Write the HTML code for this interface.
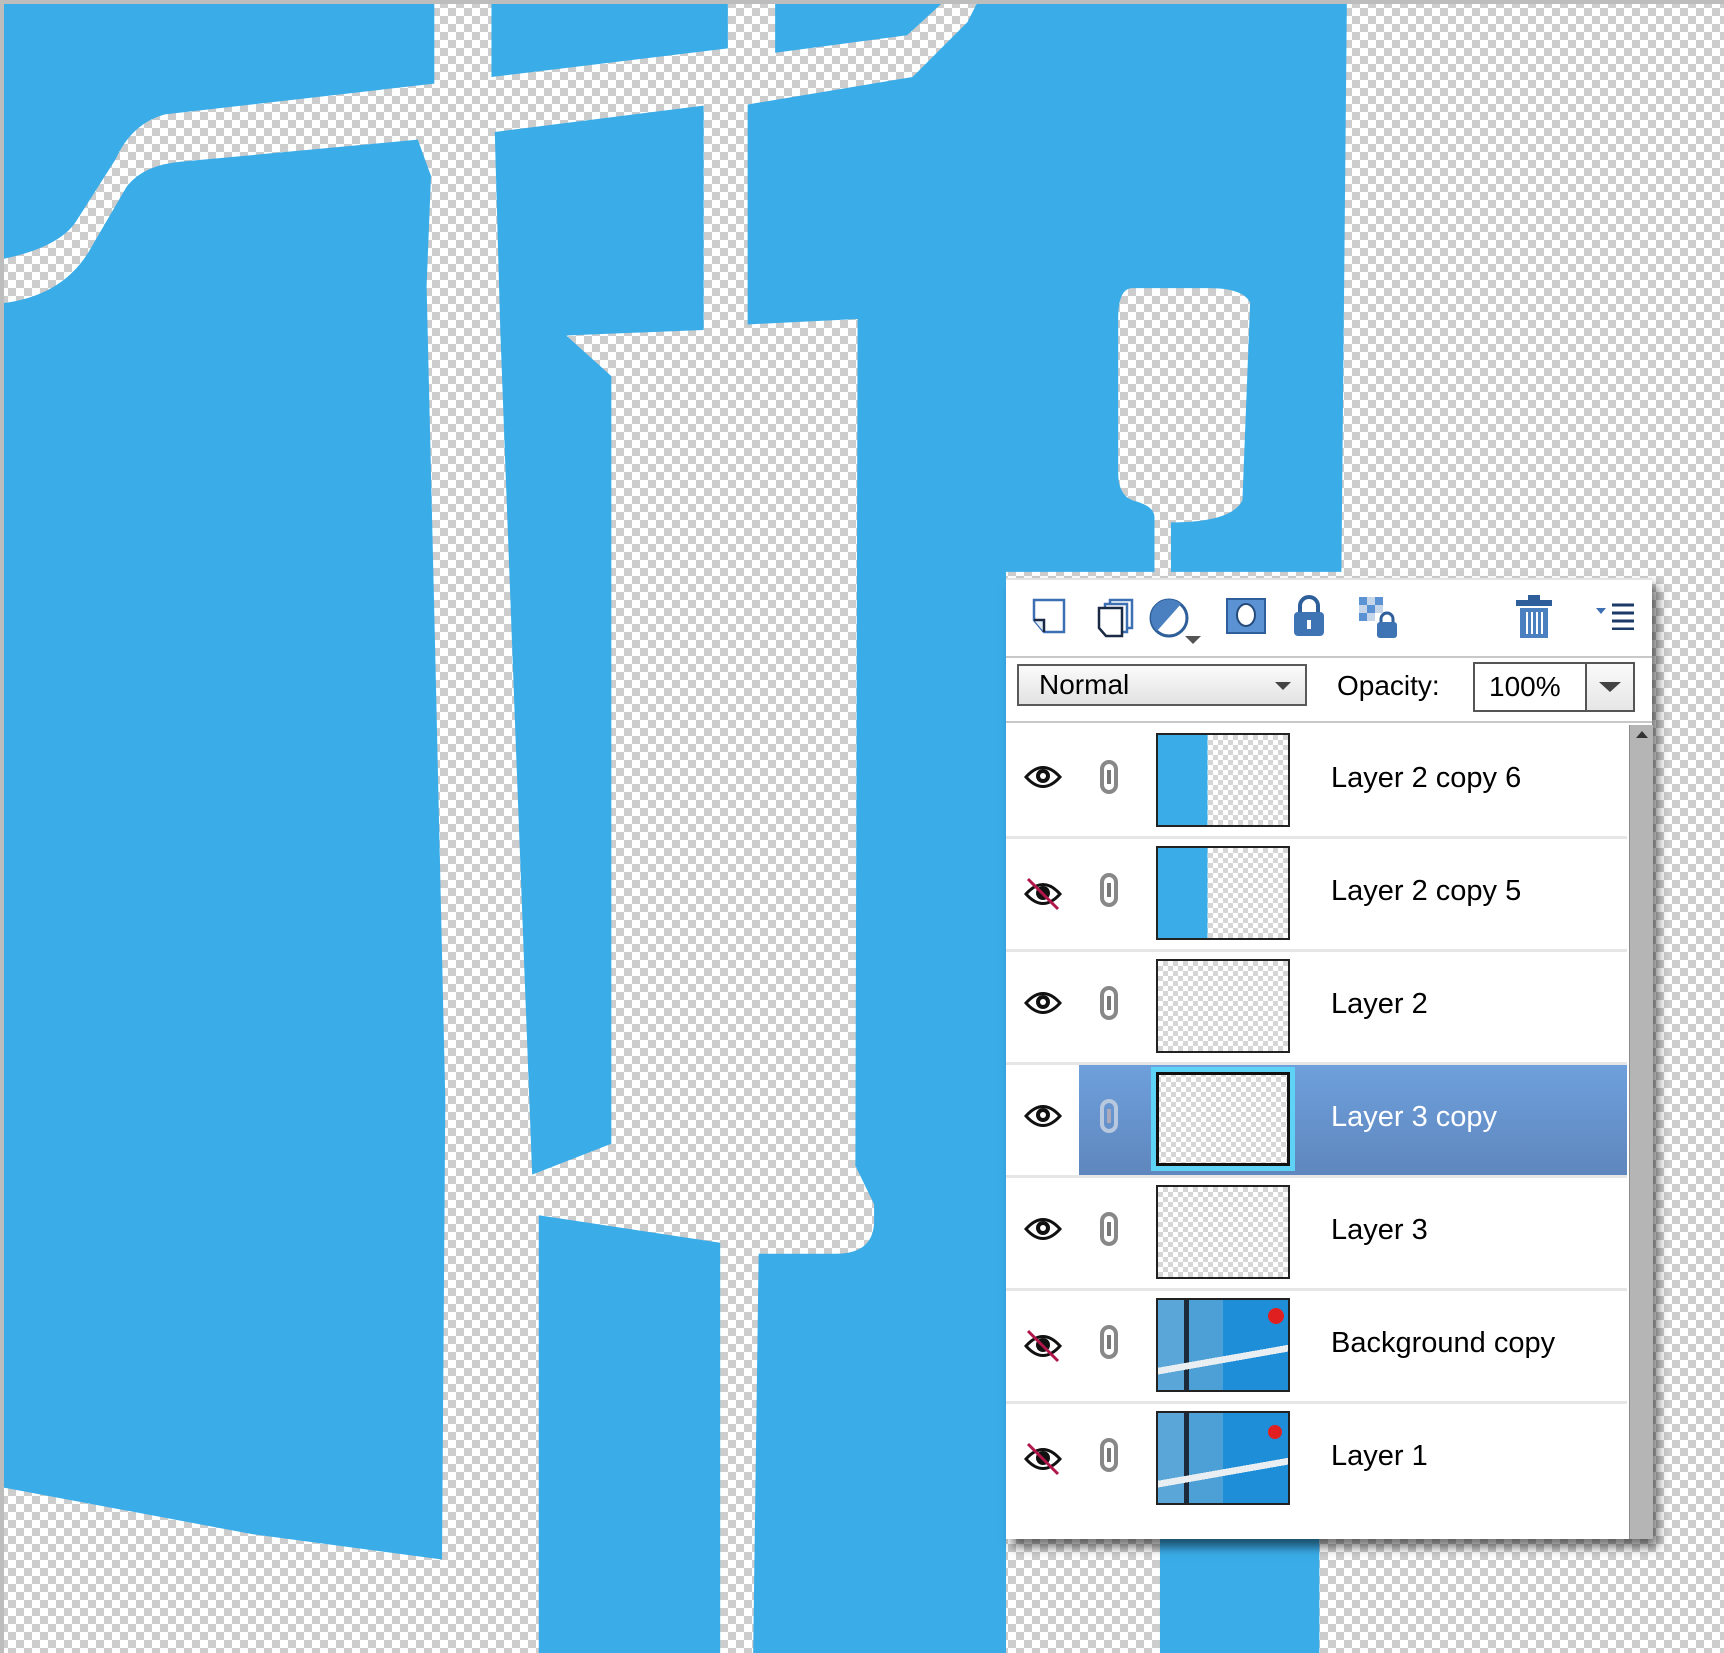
<!DOCTYPE html>
<html><head><meta charset="utf-8"><style>
html,body{margin:0;padding:0}
body{width:1724px;height:1653px;position:relative;overflow:hidden;font-family:"Liberation Sans","DejaVu Sans",sans-serif;
background-color:#fff;background-image:conic-gradient(#cdcdcd 25%,#fff 0 50%,#cdcdcd 0 75%,#fff 0);background-size:16px 16px;}
#bg{position:absolute;left:0;top:0;width:1724px;height:1653px}
.frame{position:absolute;left:0;top:0;width:1724px;height:1653px;box-sizing:border-box;border-top:4px solid #bdbdbd;border-left:4px solid #bdbdbd}
#panel{position:absolute;left:1006px;top:578px;width:646px;height:959px;background:#fff;box-shadow:6px 8px 10px rgba(0,0,0,.55);border-top:2px solid #e4e4e4}
.tb{position:absolute;left:0;top:0;width:646px;height:76px;border-bottom:2px solid #c8c8c8}
.ic{position:absolute;top:18px}
.dd{position:absolute;left:11px;top:84px;width:290px;height:42px;border:2px solid #5a5a5a;box-sizing:border-box;background:linear-gradient(#fbfbfb,#e2e2e2);font-size:28px;line-height:38px;padding-left:20px}
.dd:after{content:"";position:absolute;right:14px;top:16px;border:8px solid transparent;border-top:8px solid #444;border-bottom:0}
.op{position:absolute;left:331px;top:84px;font-size:28px;line-height:44px}
.ob{position:absolute;left:467px;top:82px;width:162px;height:50px;border:2px solid #555;box-sizing:border-box;background:#fff;font-size:28px;line-height:46px;padding-left:14px}
.ob .btn{position:absolute;right:0;top:0;width:46px;height:46px;border-left:2px solid #555;background:linear-gradient(#fafafa,#e6e6e6)}
.ob .btn:after{content:"";position:absolute;left:12px;top:18px;border:11px solid transparent;border-top:10px solid #444;border-bottom:0}
.sep2{position:absolute;left:0;top:141px;width:646px;height:2px;background:#c8c8c8}
.sb{position:absolute;left:623px;top:145px;width:23px;height:814px;background:#b5b5b5;border-left:1px solid #8c8c8c}
.sb:before{content:"";position:absolute;left:6px;top:6px;border:6px solid transparent;border-bottom:7px solid #333;border-top:0}
.row{position:absolute;left:0;width:621px;height:110px;border-bottom:3px solid #e6e6e6}
.row .nm{position:absolute;left:325px;top:36px;font-size:29px;color:#000}
.thumb{position:absolute;left:150px;top:7px;width:134px;height:94px;border:2px solid #222;box-sizing:border-box;background-color:#fff;background-image:conic-gradient(#d6d6d6 25%,#fff 0 50%,#d6d6d6 0 75%,#fff 0);background-size:10px 10px}
.sel{position:absolute;left:73px;top:0;width:548px;height:110px;background:linear-gradient(#6ea0dc,#5f86bd)}
.eye{position:absolute;left:18px;top:38px}
.lk{position:absolute;left:93px;top:34px}
</style></head><body>
<svg id="bg" viewBox="0 0 1568 1503" preserveAspectRatio="none">
<g fill="#3aade9">
<path d="M0 0H395V76L150 104Q120 112 105 145L70 200Q55 225 0 236Z"/>
<path d="M0 276Q55 270 80 230L115 170Q130 150 165 147L380 127L392 160L388 260L396 600L405 1000L402 1418L230 1395L0 1352Z"/>
<path d="M447 0H662V44L447 70Z"/>
<path d="M450 120L640 96V300L515 305L556 342L556 1040L484 1068L470 700L455 300Z"/>
<path d="M705 0H860L825 32L705 48Z"/>
<path d="M680 95L830 70L880 20L890 0H1225L1220 520H1065V475Q1120 475 1130 455L1137 275Q1130 262 1100 262H1030Q1017 262 1017 290V430Q1017 450 1030 455Q1050 460 1050 470V520H915V1503H685L690 1140L760 1140Q795 1140 795 1110V1095L778 1060L780 290L680 295Z"/>
<path d="M490 1105L655 1130V1503H490Z"/>
<path d="M1055 1395H1200V1503H1055Z"/>
</g>
</svg>
<div class="frame"></div>
<div id="panel">
 <div class="tb">
  <svg class="ic" style="left:26px" width="36" height="36" viewBox="0 0 36 36"><path d="M2 2H32V34H12L2 22Z" fill="#fff" stroke="#3d6fb3" stroke-width="2.5"/><path d="M2 22H12V34" fill="#e5edf7" stroke="#1b2a44" stroke-width="2.5"/></svg>
  <svg class="ic" style="left:90px" width="40" height="40" viewBox="0 0 40 40"><rect x="14" y="2" width="22" height="28" fill="#fff" stroke="#3d6fb3" stroke-width="2.5"/><rect x="9" y="6" width="22" height="28" fill="#fff" stroke="#3d6fb3" stroke-width="2.5"/><path d="M3 10H26V38H10L3 30Z" fill="#fff" stroke="#1b2a44" stroke-width="2.5"/></svg>
  <svg class="ic" style="left:143px" width="52" height="46" viewBox="0 0 52 46"><circle cx="20" cy="20" r="18" fill="#fff" stroke="#2e5f9a" stroke-width="3"/><path d="M8 33A18 18 0 0 1 32 6Z" fill="#4a80c0"/><path d="M36 38H52L44 46Z" fill="#555"/></svg>
  <svg class="ic" style="left:220px" width="40" height="36" viewBox="0 0 40 36"><rect x="1" y="1" width="38" height="34" fill="#5b92d4" stroke="#2e5f9a" stroke-width="2"/><ellipse cx="20" cy="17" rx="9" ry="11" fill="#fff" stroke="#244a7a" stroke-width="2"/></svg>
  <svg class="ic" style="left:286px;top:15px" width="34" height="42" viewBox="0 0 34 42"><path d="M8 18V11A9 9 0 0 1 26 11V18" fill="none" stroke="#2e5f9a" stroke-width="4"/><rect x="2" y="17" width="30" height="24" rx="4" fill="#3f74b4"/><rect x="15" y="25" width="4" height="9" fill="#fff"/></svg>
  <svg class="ic" style="left:353px;top:17px" width="40" height="42" viewBox="0 0 40 42"><g fill="#5b92d4"><rect x="0" y="0" width="8" height="8"/><rect x="16" y="0" width="8" height="8"/><rect x="8" y="8" width="8" height="8"/><rect x="0" y="16" width="8" height="8"/></g><g fill="#c5d6ea"><rect x="8" y="0" width="8" height="8"/><rect x="0" y="8" width="8" height="8"/><rect x="16" y="8" width="8" height="8"/><rect x="8" y="16" width="8" height="8"/></g><path d="M22 26V22A6 6 0 0 1 34 22V26" fill="none" stroke="#2e5f9a" stroke-width="3"/><rect x="18" y="25" width="20" height="16" rx="3" fill="#3f74b4"/></svg>
  <svg class="ic" style="left:510px;top:14px" width="36" height="46" viewBox="0 0 36 46"><rect x="12" y="1" width="12" height="5" fill="#2e5f9a"/><rect x="0" y="6" width="36" height="6" fill="#2e5f9a"/><path d="M4 14H32V44H4Z" fill="#4a80c0"/><g stroke="#fff" stroke-width="2"><path d="M11 18V40M16 18V40M21 18V40M26 18V40"/></g></svg>
  <svg class="ic" style="left:590px;top:22px" width="40" height="28" viewBox="0 0 40 28"><path d="M0 6H10L5 12Z" fill="#3d6fb3"/><g stroke="#1b3a66" stroke-width="3"><path d="M16 3H38M16 11H38M16 19H38M16 27H38"/></g></svg>
 </div>
 <div class="dd">Normal</div>
 <div class="op">Opacity:</div>
 <div class="ob">100%<div class="btn"></div></div>
 <div class="sep2"></div>
 <div class="sb"></div>

 <div class="row" style="top:146px"><div class="eye"><svg width="38" height="26" viewBox="0 0 38 26"><path d="M2 13Q19 -6 36 13Q19 32 2 13Z" fill="#fff" stroke="#111" stroke-width="3"/><circle cx="19" cy="12" r="7" fill="#111"/><circle cx="19" cy="12" r="3" fill="#fff"/></svg></div><div class="lk"><svg width="20" height="34" viewBox="0 0 20 34"><rect x="3" y="2" width="14" height="30" rx="7" fill="none" stroke="#888" stroke-width="4"/><rect x="8" y="10" width="4" height="14" fill="#777"/></svg></div><div class="thumb" style="background-image:linear-gradient(90deg,#3aade9 0 38%,transparent 38%),conic-gradient(#d6d6d6 25%,#fff 0 50%,#d6d6d6 0 75%,#fff 0);background-size:100% 100%,10px 10px"></div><div class="nm">Layer 2 copy 6</div></div>
 <div class="row" style="top:259px"><div class="eye"><svg width="38" height="34" viewBox="0 0 38 34"><path d="M2 17Q19 -2 36 17Q19 36 2 17Z" fill="#fff" stroke="#111" stroke-width="3"/><circle cx="19" cy="16" r="7" fill="#111"/><path d="M4 2L34 32" stroke="#b0164a" stroke-width="3"/></svg></div><div class="lk"><svg width="20" height="34" viewBox="0 0 20 34"><rect x="3" y="2" width="14" height="30" rx="7" fill="none" stroke="#888" stroke-width="4"/><rect x="8" y="10" width="4" height="14" fill="#777"/></svg></div><div class="thumb" style="background-image:linear-gradient(90deg,#3aade9 0 38%,transparent 38%),conic-gradient(#d6d6d6 25%,#fff 0 50%,#d6d6d6 0 75%,#fff 0);background-size:100% 100%,10px 10px"></div><div class="nm">Layer 2 copy 5</div></div>
 <div class="row" style="top:372px"><div class="eye"><svg width="38" height="26" viewBox="0 0 38 26"><path d="M2 13Q19 -6 36 13Q19 32 2 13Z" fill="#fff" stroke="#111" stroke-width="3"/><circle cx="19" cy="12" r="7" fill="#111"/><circle cx="19" cy="12" r="3" fill="#fff"/></svg></div><div class="lk"><svg width="20" height="34" viewBox="0 0 20 34"><rect x="3" y="2" width="14" height="30" rx="7" fill="none" stroke="#888" stroke-width="4"/><rect x="8" y="10" width="4" height="14" fill="#777"/></svg></div><div class="thumb"></div><div class="nm">Layer 2</div></div>
 <div class="row" style="top:485px"><div class="sel"></div><div class="eye"><svg width="38" height="26" viewBox="0 0 38 26"><path d="M2 13Q19 -6 36 13Q19 32 2 13Z" fill="#fff" stroke="#111" stroke-width="3"/><circle cx="19" cy="12" r="7" fill="#111"/><circle cx="19" cy="12" r="3" fill="#fff"/></svg></div><div class="lk"><svg width="20" height="34" viewBox="0 0 20 34"><rect x="3" y="2" width="14" height="30" rx="7" fill="none" stroke="#b8c8de" stroke-width="4"/><rect x="8" y="10" width="4" height="14" fill="#aab"/></svg></div><div class="thumb" style="left:145px;top:2px;width:144px;height:104px;border:5px solid #5fd3f5;box-shadow:inset 0 0 0 3px #111"></div><div class="nm" style="color:#fff">Layer 3 copy</div></div>
 <div class="row" style="top:598px"><div class="eye"><svg width="38" height="26" viewBox="0 0 38 26"><path d="M2 13Q19 -6 36 13Q19 32 2 13Z" fill="#fff" stroke="#111" stroke-width="3"/><circle cx="19" cy="12" r="7" fill="#111"/><circle cx="19" cy="12" r="3" fill="#fff"/></svg></div><div class="lk"><svg width="20" height="34" viewBox="0 0 20 34"><rect x="3" y="2" width="14" height="30" rx="7" fill="none" stroke="#888" stroke-width="4"/><rect x="8" y="10" width="4" height="14" fill="#777"/></svg></div><div class="thumb"></div><div class="nm">Layer 3</div></div>
 <div class="row" style="top:711px"><div class="eye"><svg width="38" height="34" viewBox="0 0 38 34"><path d="M2 17Q19 -2 36 17Q19 36 2 17Z" fill="#fff" stroke="#111" stroke-width="3"/><circle cx="19" cy="16" r="7" fill="#111"/><path d="M4 2L34 32" stroke="#b0164a" stroke-width="3"/></svg></div><div class="lk"><svg width="20" height="34" viewBox="0 0 20 34"><rect x="3" y="2" width="14" height="30" rx="7" fill="none" stroke="#888" stroke-width="4"/><rect x="8" y="10" width="4" height="14" fill="#777"/></svg></div><div class="thumb" style="background:linear-gradient(170deg,transparent 60%,#e8eef2 60% 66%,transparent 66%),linear-gradient(90deg,#5aa6d8 0 20%,#1d2a3a 20% 24%,#4da0d6 24% 50%,#1f8ed8 50%);"><div style="position:absolute;right:4px;top:8px;width:16px;height:16px;border-radius:50%;background:#e02020"></div></div><div class="nm">Background copy</div></div>
 <div class="row" style="top:824px;border-bottom:0"><div class="eye"><svg width="38" height="34" viewBox="0 0 38 34"><path d="M2 17Q19 -2 36 17Q19 36 2 17Z" fill="#fff" stroke="#111" stroke-width="3"/><circle cx="19" cy="16" r="7" fill="#111"/><path d="M4 2L34 32" stroke="#b0164a" stroke-width="3"/></svg></div><div class="lk"><svg width="20" height="34" viewBox="0 0 20 34"><rect x="3" y="2" width="14" height="30" rx="7" fill="none" stroke="#888" stroke-width="4"/><rect x="8" y="10" width="4" height="14" fill="#777"/></svg></div><div class="thumb" style="background:linear-gradient(170deg,transparent 60%,#e8eef2 60% 66%,transparent 66%),linear-gradient(90deg,#5aa6d8 0 20%,#1d2a3a 20% 24%,#4da0d6 24% 50%,#1f8ed8 50%);"><div style="position:absolute;right:6px;top:12px;width:14px;height:14px;border-radius:50%;background:#e02020"></div></div><div class="nm">Layer 1</div></div>
</div>
</body></html>
